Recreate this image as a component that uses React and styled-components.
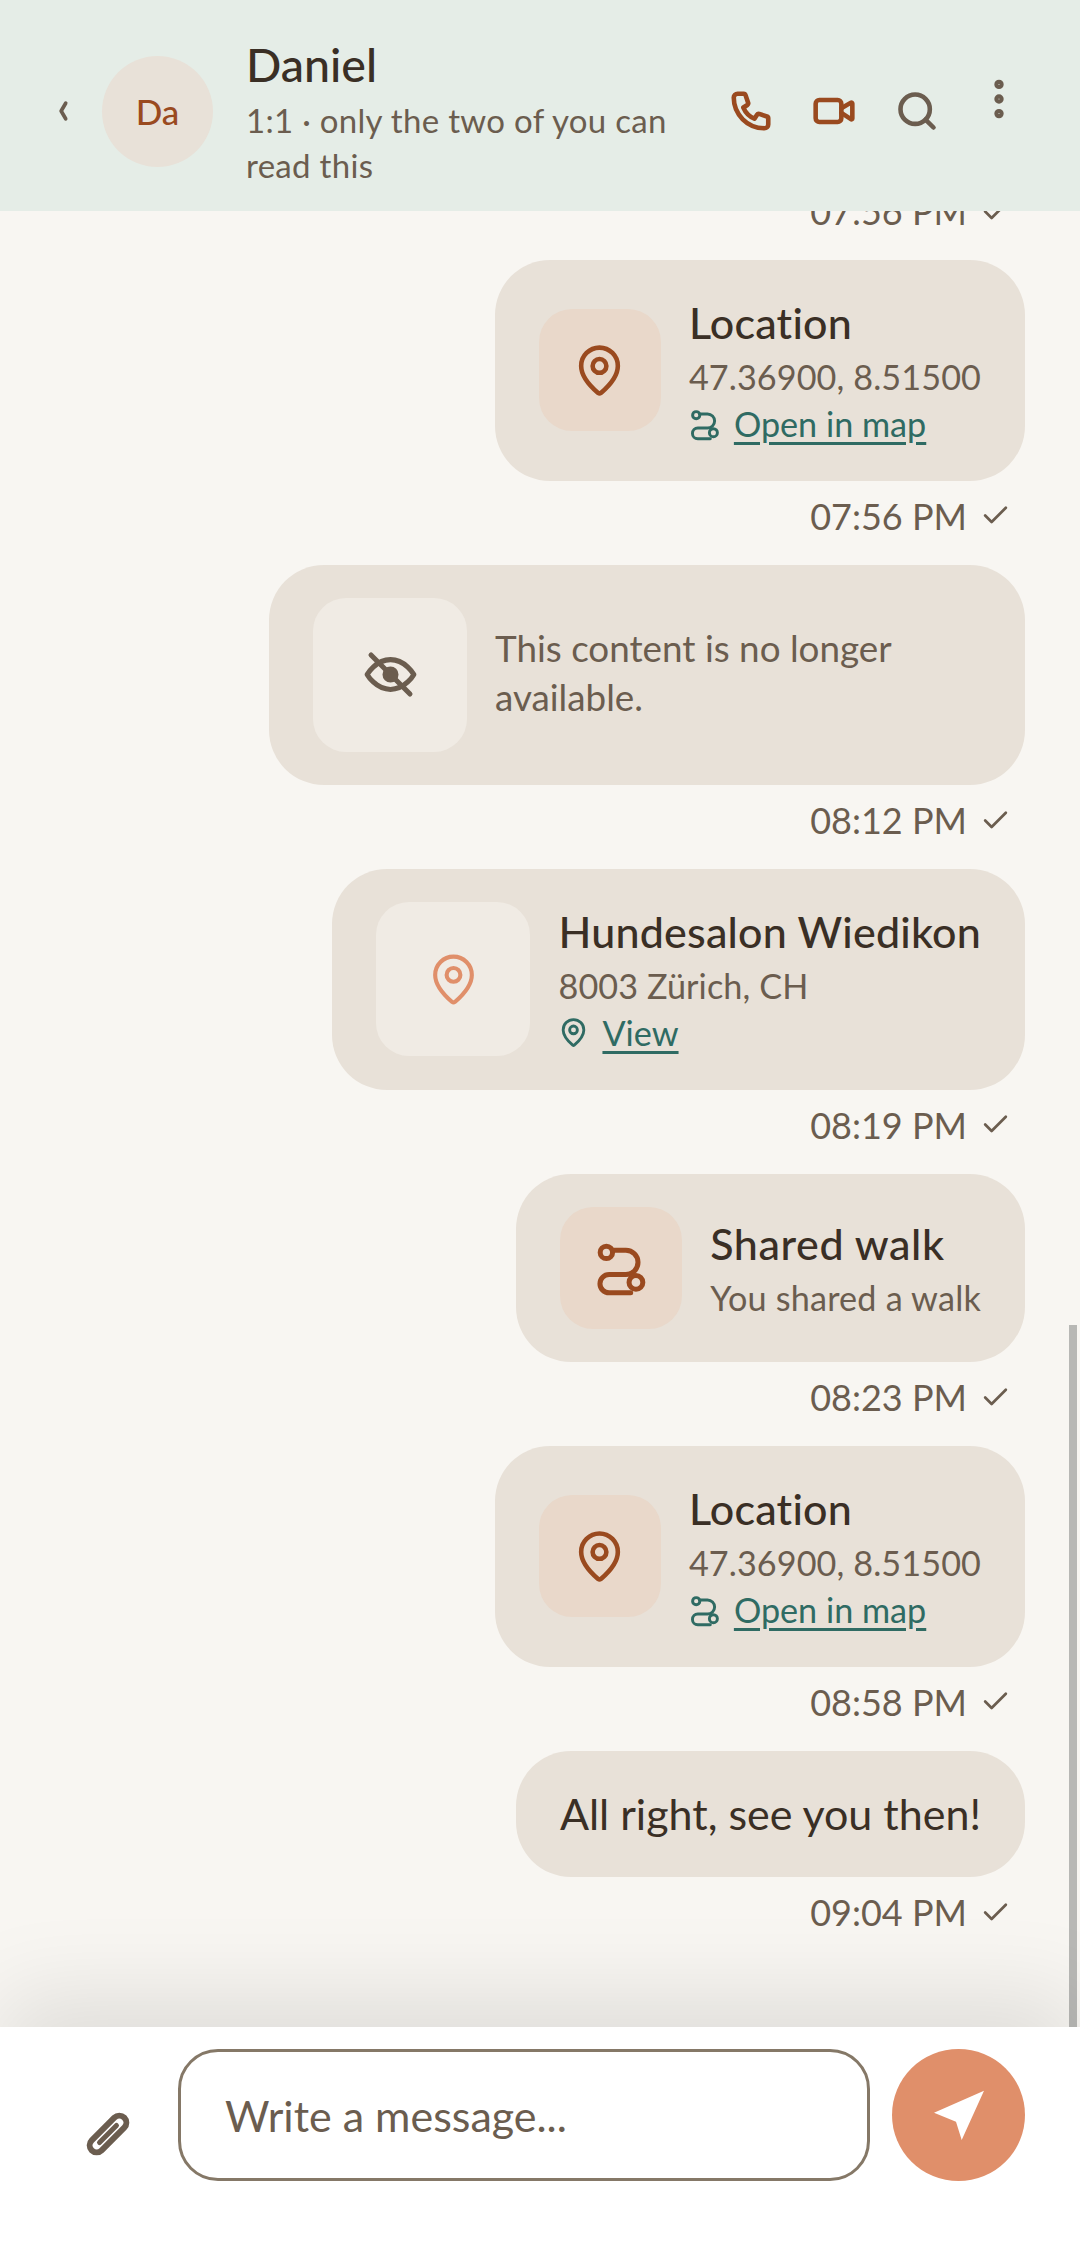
import React from "react";
import styled, { createGlobalStyle } from "styled-components";
import { Check, EllipsisVertical, MapPin, Search, Video } from "lucide-react";

const Global = createGlobalStyle`
  html, body { margin: 0; padding: 0; background: #f8f6f2; }
  * { box-sizing: border-box; }
`;

const Page = styled.div`
  width: 1080px;
  height: 2268px;
  display: flex;
  flex-direction: column;
  overflow: hidden;
  background: #f8f6f2;
  font-family: "Lato", "Noto Sans", sans-serif;
  color: #3a2f25;
`;

const Header = styled.header`
  flex: 0 0 211px;
  display: flex;
  align-items: center;
  padding: 11px 56px 0 45px;
  background: #e5ede7;
  position: relative;
  z-index: 2;
`;

const BackButton = styled.div`
  width: 34px;
  height: 34px;
  margin-right: 23px;
  color: #6b5d4f;
  display: flex;
`;

const Avatar = styled.div`
  width: 111px;
  height: 111px;
  flex: none;
  border-radius: 50%;
  background: #e8e1d8;
  color: #9a4a1f;
  display: flex;
  align-items: center;
  justify-content: center;
  font-size: 35px;
  font-weight: 500;
`;

const Peer = styled.div`
  flex: 1;
  min-width: 0;
  margin-left: 33px;
  margin-right: 16px;
  padding-bottom: 5px;
  display: flex;
  flex-direction: column;
`;

const PeerName = styled.div`
  font-size: 46.5px;
  line-height: 68px;
  font-weight: 500;
  color: #3a2f25;
`;

const PeerNote = styled.div`
  font-size: 33px;
  line-height: 45px;
  color: #6b5d4f;
  letter-spacing: 0.3px;
`;

const Actions = styled.div`
  display: flex;
  align-items: center;
  gap: 39px;
  flex: none;
`;

const ActionIcon = styled.div`
  width: 44px;
  height: 44px;
  display: flex;
  justify-content: center;
  align-items: center;
  color: ${(p) => (p.$accent ? "#9a4a1f" : "#6b5d4f")};
`;

const MoreIcon = styled.div`
  width: 50px;
  height: 50px;
  margin: 0 0 24px -4px;
  display: flex;
  color: #6b5d4f;
`;

const Thread = styled.main`
  flex: 1;
  min-height: 0;
  position: relative;
  overflow: hidden;
  display: flex;
  flex-direction: column;
  justify-content: flex-end;
  align-items: flex-end;
  padding: 0 55px 90px 0;
`;

const ScrollThumb = styled.div`
  position: absolute;
  right: 3px;
  top: 1114px;
  bottom: 0;
  width: 8px;
  background: #b8b8b5;
`;

const Message = styled.div`
  flex: none;
  display: flex;
  flex-direction: column;
  align-items: flex-end;
  margin-bottom: 24px;
  &:last-of-type { margin-bottom: 0; }
`;

const Bubble = styled.div`
  display: flex;
  align-items: center;
  gap: 28px;
  padding: 33.25px 44px;
  border-radius: 55px;
  background: #e8e1d8;
`;

const TextBubble = styled.div`
  padding: 33.25px 44px;
  border-radius: 55px;
  background: #e8e1d8;
  font-size: 43px;
  line-height: 60px;
  color: #3a2f25;
`;

const Tile = styled.div`
  width: ${(p) => (p.$large ? 154 : 122)}px;
  height: ${(p) => (p.$large ? 154 : 122)}px;
  flex: none;
  border-radius: 33px;
  display: flex;
  align-items: center;
  justify-content: center;
  background: ${(p) => (p.$muted ? "#f0ebe4" : "#e9d8ca")};
  color: ${(p) => (p.$tone === "soft" ? "#e08f6a" : p.$tone === "grey" ? "#6b5d4f" : "#9a4a1f")};
`;

const Details = styled.div`
  display: flex;
  flex-direction: column;
`;

const Title = styled.div`
  font-size: 43px;
  line-height: 60px;
  font-weight: 500;
  letter-spacing: ${(p) => (p.$loose ? 0.6 : 0.2)}px;
  color: #3a2f25;
`;

const Sub = styled.div`
  font-size: 34.2px;
  line-height: 47px;
  letter-spacing: ${(p) => (p.$loose ? 0.2 : 0.1)}px;
  color: #6b5d4f;
`;

const Notice = styled.div`
  width: 486px;
  padding-bottom: 3px;
  font-size: 36.8px;
  line-height: 49px;
  color: #6b5d4f;
`;

const LinkRow = styled.div`
  display: flex;
  align-items: center;
  gap: 13px;
  height: 47px;
  color: #2f6b63;
`;

const LinkText = styled.span`
  font-size: 34.2px;
  line-height: 47px;
  text-decoration: underline;
  text-decoration-thickness: 3px;
  text-underline-offset: 5px;
`;

const Meta = styled.div`
  display: flex;
  align-items: center;
  height: 50px;
  margin-top: 10px;
  gap: 13px;
  padding-right: 14px;
  font-size: 36px;
  color: #6b5d4f;
`;

const Composer = styled.footer`
  flex: 0 0 241px;
  display: flex;
  align-items: flex-start;
  padding: 22px 55px 0 87px;
  background: #fff;
  position: relative;
  z-index: 1;
  box-shadow: 0 -30px 90px rgba(0, 0, 0, 0.1);
`;

const AttachButton = styled.div`
  width: 42px;
  height: 42px;
  margin: 64px 49px 0 0;
  flex: none;
  display: flex;
  color: #6b5d4f;
`;

const InputBox = styled.div`
  flex: 1;
  height: 132px;
  display: flex;
  align-items: center;
  padding: 0 44px;
  border: 3px solid #857867;
  border-radius: 40px;
  font-size: 43px;
  color: #6b5d4f;
`;

const SendButton = styled.div`
  width: 133px;
  height: 132px;
  margin-left: 22px;
  flex: none;
  border-radius: 50%;
  background: #e08f6a;
  display: flex;
  align-items: center;
  justify-content: center;
`;

const RouteIcon = ({ size, stroke = 2.2 }) => (
  <svg width={size} height={size} viewBox="0 0 24 24" fill="none" stroke="currentColor" strokeWidth={stroke} strokeLinecap="round" strokeLinejoin="round" style={{ overflow: "visible", flex: "none" }}>
    <circle cx="5.4" cy="5.4" r="2.7" />
    <path d="M8 4.45h5.9a5.3 5.3 0 0 1 0 10.6H6.6a4 4 0 0 0 0 8H16" />
    <circle cx="18.3" cy="18.5" r="3" />
  </svg>
);

const PhoneIcon = () => (
  <svg width="46" height="46" viewBox="0 0 24 24" fill="none" stroke="currentColor" strokeWidth="2.4" strokeLinecap="round" strokeLinejoin="round" style={{ flex: "none" }}>
    <path d="M5 3h3.2a1 1 0 0 1 .95.7l1.35 4a1 1 0 0 1-.4 1.15L8 10.2a11 11 0 0 0 5.8 5.8l1.35-2.1a1 1 0 0 1 1.15-.4l4 1.35a1 1 0 0 1 .7.95V19a2 2 0 0 1-2 2A16 16 0 0 1 3 5a2 2 0 0 1 2-2z" />
  </svg>
);

const BackChevron = () => (
  <svg width="34" height="34" viewBox="0 0 24 24" fill="none" stroke="currentColor" strokeWidth="2.6" strokeLinecap="round" strokeLinejoin="round">
    <path d="M14.6 6.5 11.4 12l3.2 5.5" />
  </svg>
);

const HiddenEye = () => (
  <svg width="55" height="55" viewBox="0 0 24 24" fill="none" stroke="currentColor" strokeWidth="2.2" strokeLinecap="round" strokeLinejoin="round">
    <path d="M1.8 12S5.5 5.5 12 5.5 22.2 12 22.2 12 18.5 18.5 12 18.5 1.8 12 1.8 12z" />
    <circle cx="12" cy="12" r="2.4" fill="currentColor" />
    <path d="M3.5 3.5l17 17" />
  </svg>
);

const Clip = () => (
  <svg width="42" height="42" viewBox="0 0 42 42" fill="none" stroke="currentColor" strokeLinecap="round" style={{ overflow: "visible" }}>
    <g transform="rotate(45 21 21)">
      <rect x="14" y="-2" width="14" height="46" rx="7" strokeWidth="6" />
      <path d="M21 9v24" strokeWidth="5" />
    </g>
  </svg>
);

const SendIcon = () => (
  <svg width="50" height="50" viewBox="0 0 50 50" fill="#fff">
    <polygon points="50,0.7 0,22.7 22,31.7 27.7,50" />
  </svg>
);

const Stamp = ({ time }) => (
  <Meta>
    {time}
    <Check size={31} strokeWidth={2.1} />
  </Meta>
);

const LocationBubble = ({ time }) => (
  <Message>
    <Bubble>
      <Tile>
        <MapPin size={55} strokeWidth={2} />
      </Tile>
      <Details>
        <Title>Location</Title>
        <Sub>47.36900, 8.51500</Sub>
        <LinkRow>
          <RouteIcon size={32} />
          <LinkText>Open in map</LinkText>
        </LinkRow>
      </Details>
    </Bubble>
    <Stamp time={time} />
  </Message>
);

export default function App() {
  return (
    <Page>
      <Global />
      <Header>
        <BackButton>
          <BackChevron />
        </BackButton>
        <Avatar>Da</Avatar>
        <Peer>
          <PeerName>Daniel</PeerName>
          <PeerNote>1:1 · only the two of you can read this</PeerNote>
        </Peer>
        <Actions>
          <ActionIcon $accent><PhoneIcon /></ActionIcon>
          <ActionIcon $accent><Video size={44} strokeWidth={2.5} /></ActionIcon>
          <ActionIcon><Search size={44} strokeWidth={2.5} /></ActionIcon>
          <MoreIcon><EllipsisVertical size={50} strokeWidth={2.5} /></MoreIcon>
        </Actions>
      </Header>
      <Thread>
        <ScrollThumb />
        <Message>
          <Stamp time="07:56 PM" />
        </Message>
        <LocationBubble time="07:56 PM" />
        <Message>
          <Bubble>
            <Tile $large $muted $tone="grey"><HiddenEye /></Tile>
            <Notice>This content is no longer available.</Notice>
          </Bubble>
          <Stamp time="08:12 PM" />
        </Message>
        <Message>
          <Bubble>
            <Tile $large $muted $tone="soft"><MapPin size={55} strokeWidth={1.8} /></Tile>
            <Details>
              <Title>Hundesalon Wiedikon</Title>
              <Sub>8003 Zürich, CH</Sub>
              <LinkRow>
                <MapPin size={31} strokeWidth={2.2} />
                <LinkText>View</LinkText>
              </LinkRow>
            </Details>
          </Bubble>
          <Stamp time="08:19 PM" />
        </Message>
        <Message>
          <Bubble>
            <Tile><RouteIcon size={55} /></Tile>
            <Details>
              <Title $loose>Shared walk</Title>
              <Sub $loose>You shared a walk</Sub>
            </Details>
          </Bubble>
          <Stamp time="08:23 PM" />
        </Message>
        <LocationBubble time="08:58 PM" />
        <Message>
          <TextBubble>All right, see you then!</TextBubble>
          <Stamp time="09:04 PM" />
        </Message>
      </Thread>
      <Composer>
        <AttachButton><Clip /></AttachButton>
        <InputBox>Write a message...</InputBox>
        <SendButton><SendIcon /></SendButton>
      </Composer>
    </Page>
  );
}
